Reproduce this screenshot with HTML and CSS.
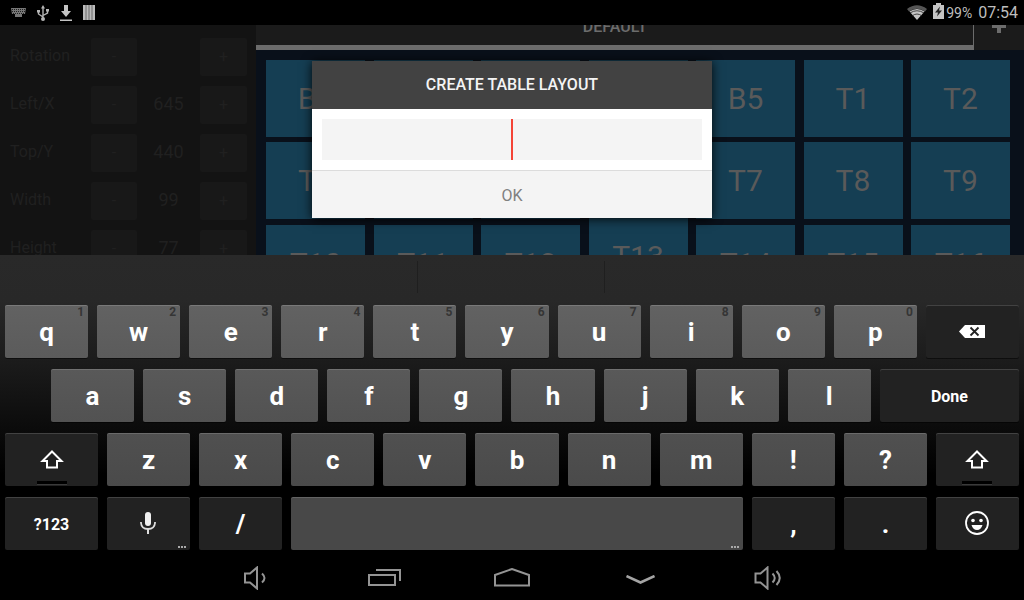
FILE: index.html
```html
<!DOCTYPE html>
<html lang="en">
<head>
<meta charset="utf-8">
<title>Create table layout</title>
<link rel="stylesheet" href="styles.css">
</head>
<body>
<header class="status">
  <div class="status-left">
    <svg width="15" height="9" viewBox="0 0 15 9"><path d="M0 0H15L14 6H11V9H4V6H1Z" fill="#777"/><path d="M1 1.500H14M1 3.500H14M2 5.500H13" stroke="#222" stroke-dasharray="1 1"/></svg>
    <svg width="12" height="16" viewBox="0 0 12 16" fill="none" stroke="#b5b5b5" stroke-width="1.400"><path d="M6 2V14M6 12L1.500 9V6M6 10.500L10.500 8V5"/><path d="M6 0L8 3.500H4ZM0 5H3V7.500H0ZM9 4H12V6.500H9Z" fill="#b5b5b5" stroke="none"/><circle cx="6" cy="14" r="2" fill="#b5b5b5" stroke="none"/></svg>
    <svg width="12" height="16" viewBox="0 0 12 16" fill="#c4c4c4"><path d="M4 0H8V6H11L6 12L1 6H4ZM0 14.500H12V16H0Z"/></svg>
    <svg width="12" height="15" viewBox="0 0 12 15"><path d="M0 0H12V15H0Z" fill="#bbb"/><path d="M3 0V15M6 0V15M9 0V15" stroke="#555" stroke-width=".8"/></svg>
  </div>
  <div class="status-right">
    <svg width="20" height="15" viewBox="0 0 20 15"><path d="M0 4Q10-3.500 20 4L18 6.500Q10 1 2 6.500Z" fill="#555"/><path d="M2.500 6.500Q10 1.500 17.500 6.500L10 15Z" fill="#c4c4c4"/><path d="M3 8Q10 3.500 17 8M5 11Q10 7 15 11" fill="none" stroke="#222" stroke-width=".8"/></svg>
    <svg class="battery" width="11" height="16" viewBox="0 0 11 16"><path d="M0 2H3V0H8V2H11V16H0Z" fill="#c4c4c4"/><path d="M7 3.500L2 9.500H5L4 13.500L9 7.500H6Z" fill="#222"/></svg>
    <span class="percent">99%</span>
    <time class="clock">07:54</time>
  </div>
</header>

<main class="app">
  <aside class="panel">
    <div class="prop"><span>Rotation</span><button>-</button><output></output><button>+</button></div>
    <div class="prop"><span>Left/X</span><button>-</button><output>645</output><button>+</button></div>
    <div class="prop"><span>Top/Y</span><button>-</button><output>440</output><button>+</button></div>
    <div class="prop"><span>Width</span><button>-</button><output>99</output><button>+</button></div>
    <div class="prop"><span>Height</span><button>-</button><output>77</output><button>+</button></div>
  </aside>
  <section class="floor">
    <nav class="tabs">
      <button class="tab">DEFAULT</button>
      <button class="tab-add" aria-label="Add layout"><svg width="16" height="16" viewBox="0 0 16 16"><path d="M8 1V15M1 8H15" stroke="#6c6c6c" stroke-width="4"/></svg></button>
    </nav>
    <div class="tables">
      <button>B1</button><button>B2</button><button>B3</button><button>B4</button><button>B5</button><button>T1</button><button>T2</button>
      <button>T3</button><button>T4</button><button>T5</button><button>T6</button><button>T7</button><button>T8</button><button>T9</button>
      <button>T10</button><button>T11</button><button>T12</button><button class="raised">T13</button><button>T14</button><button>T15</button><button>T16</button>
    </div>
  </section>
  <div class="overlay">
    <form class="dialog" role="dialog" aria-labelledby="dialog-title">
      <h1 class="dialog-title" id="dialog-title">CREATE TABLE LAYOUT</h1>
      <div class="dialog-body">
        <input class="name" type="text" aria-labelledby="dialog-title">
        <span class="caret"></span>
      </div>
      <button class="ok" type="button">OK</button>
    </form>
  </div>
</main>

<section class="keyboard">
  <div class="suggestions"><span></span><span></span><span></span></div>
  <div class="keys">
    <div class="row row-1">
      <button class="key">q<sup>1</sup></button><button class="key">w<sup>2</sup></button><button class="key">e<sup>3</sup></button><button class="key">r<sup>4</sup></button><button class="key">t<sup>5</sup></button><button class="key">y<sup>6</sup></button><button class="key">u<sup>7</sup></button><button class="key">i<sup>8</sup></button><button class="key">o<sup>9</sup></button><button class="key">p<sup>0</sup></button>
      <button class="key dark wide" aria-label="Delete"><svg width="26" height="13" viewBox="0 0 26 13"><path d="M0 6.500L6 0H26V13H6Z" fill="#fff"/><path d="M11.500 2.500L19.500 10.500M19.500 2.500L11.500 10.500" stroke="#222" stroke-width="1.800"/></svg></button>
    </div>
    <div class="row row-2">
      <button class="key">a</button><button class="key">s</button><button class="key">d</button><button class="key">f</button><button class="key">g</button><button class="key">h</button><button class="key">j</button><button class="key">k</button><button class="key">l</button>
      <button class="key dark done">Done</button>
    </div>
    <div class="row row-3">
      <button class="key dark wide shift" aria-label="Shift"><svg width="24" height="19" viewBox="0 0 24 19"><path d="M12 1.500L21.500 11H17V17.500H7V11H2.500Z" fill="none" stroke="#fff" stroke-width="2"/></svg></button>
      <button class="key">z</button><button class="key">x</button><button class="key">c</button><button class="key">v</button><button class="key">b</button><button class="key">n</button><button class="key">m</button><button class="key">!</button><button class="key">?</button>
      <button class="key dark shift" aria-label="Shift"><svg width="24" height="19" viewBox="0 0 24 19"><path d="M12 1.500L21.500 11H17V17.500H7V11H2.500Z" fill="none" stroke="#fff" stroke-width="2"/></svg></button>
    </div>
    <div class="row row-4">
      <button class="key dark wide symbols">?123</button>
      <button class="key dark more" aria-label="Voice input"><svg width="17" height="23" viewBox="0 0 17 23"><rect x="5" y="0" width="6" height="14" rx="3" fill="#f0f0f0"/><path d="M1 10V11Q1.500 17 8 17Q14.500 17 15 11V10" fill="none" stroke="#ddd" stroke-width="1.800"/><path d="M8 17V22" stroke="#ddd" stroke-width="2"/></svg></button>
      <button class="key dark">/</button>
      <button class="key space more" aria-label="Space"></button>
      <button class="key dark">,</button><button class="key dark">.</button>
      <button class="key dark" aria-label="Emoji"><svg width="25" height="25" viewBox="0 0 25 25"><circle cx="12" cy="12" r="11" fill="none" stroke="#fff" stroke-width="1.800"/><circle cx="8" cy="9.500" r="1.800" fill="#fff"/><circle cx="16" cy="9.500" r="1.800" fill="#fff"/><path d="M6.500 14H17.500Q16 19 12 19Q8 19 6.500 14Z" fill="#fff"/></svg></button>
    </div>
  </div>
</section>

<nav class="navbar">
  <button aria-label="Volume down"><svg width="28" height="24" viewBox="0 0 28 24" fill="none" stroke="#949494" stroke-width="2"><path d="M3 7.500H8L15 1.500V22.500L8 16.500H3Z"/><path d="M20 7.500Q25 12 20 16.500"/></svg></button>
  <button aria-label="Recent apps"><svg width="34" height="18" viewBox="0 0 34 18" fill="none" stroke="#949494" stroke-width="2"><path d="M2 6H28V16H2ZM9 1H33V12"/></svg></button>
  <button aria-label="Home"><svg width="36" height="20" viewBox="0 0 36 20" fill="none" stroke="#949494" stroke-width="2"><path d="M1 7L18 1L35 7V17.500H1Z"/></svg></button>
  <button aria-label="Hide keyboard"><svg class="chevron" width="30" height="10" viewBox="0 0 30 10" fill="none" stroke="#a4a4a4" stroke-width="2.500"><path d="M1.500 1L15.500 7.500L29.500 1"/></svg></button>
  <button aria-label="Volume up"><svg width="28" height="24" viewBox="0 0 28 24" fill="none" stroke="#949494" stroke-width="2"><path d="M1.500 7.500H6.500L13.500 1.500V22.500L6.500 16.500H1.500Z"/><path d="M18.500 7.500Q23 12 18.500 16.500M22.500 5Q29 12 22.500 19"/></svg></button>
</nav>
</body>
</html>
```
FILE: styles.css
```css
* { box-sizing: border-box; }
body {
  margin: 0;
  height: 100vh;
  display: flex;
  flex-direction: column;
  overflow: hidden;
  background: #000;
  font-family: Roboto, "Liberation Sans", sans-serif;
}
button { margin: 0; padding: 0; border: 0; font: inherit; color: inherit; }
svg { display: block; }

.status {
  flex: 0 0 25px;
  display: flex;
  align-items: center;
  justify-content: space-between;
  padding: 0 6px 0 11px;
  color: #bebebe;
}
.status-left { display: flex; align-items: center; gap: 11px; }
.status-right { display: flex; align-items: center; gap: 6px; }
.battery { margin-bottom: 3px; }
.percent { font-size: 14px; margin-left: -4px; }
.clock { font-size: 16px; }

.app {
  position: relative;
  flex: 1 1 0;
  min-height: 0;
  display: flex;
  overflow: hidden;
  background: #131313;
}
.panel { flex: 0 0 256px; padding: 8px 9px 0 10px; color: #202020; }
.prop {
  height: 48px;
  display: grid;
  grid-template-columns: 1fr 46px 63px 47px;
  align-items: center;
  font-size: 16px;
  line-height: 18px;
}
.prop span, .prop output { padding-bottom: 2px; }
.prop button { height: 38px; border-radius: 2px; background: #181818; }
.prop output { text-align: center; font-size: 18px; }

.floor { flex: 1; min-width: 0; margin-top: -23px; background: #09101a; }
.tabs { display: flex; height: 48px; background: #1b1b1b; }
.tab {
  flex: 1;
  background: none;
  box-shadow: inset 0 -5px #6c6c6c, inset -1px 0 #6c6c6c;
  color: #6c6c6c;
  font-size: 16px;
  font-weight: 500;
}
.tab-add { flex: 0 0 50px; display: grid; place-items: center; background: none; }
.tables {
  display: grid;
  grid-template-columns: repeat(7, 99px);
  grid-template-rows: 77px 77px 78px;
  row-gap: 5px;
  justify-content: space-between;
  align-items: end;
  padding: 10px 14px 0 10px;
}
.tables button {
  height: 77px;
  background: #153e53;
  color: #5a5a5a;
  font-size: 30px;
}
.tables .raised { align-self: start; margin-top: -6px; }

.overlay {
  position: absolute;
  inset: 0;
  display: grid;
  place-items: center;
  padding-bottom: 2px;
}
.dialog { width: 400px; background: #fff; box-shadow: 0 1px 10px rgba(0, 0, 0, .9); }
.dialog-title {
  margin: 0;
  background: #424242;
  color: #f4f4f4;
  font-size: 16px;
  font-weight: 500;
  line-height: 48px;
  text-align: center;
}
.dialog-body { position: relative; padding: 10px; }
.name {
  display: block;
  width: 100%;
  height: 41px;
  border: 0;
  outline: 0;
  background: #f4f4f4;
  text-align: center;
}
.caret { position: absolute; left: 50%; top: 10px; bottom: 10px; width: 2px; margin-left: -1px; background: #f44336; }
.ok {
  display: block;
  width: 100%;
  height: 48px;
  padding-top: 2px;
  border-top: 1px solid #dcdcdc;
  background: #f4f4f4;
  color: #808080;
  font-size: 16px;
}

.keyboard {
  flex: 0 0 auto;
  background: linear-gradient(#292929 0, #282828 45px, #1b1b1b 108px, #0c0c0c 170px, #000 220px);
}
.suggestions { display: flex; height: 50px; padding: 6px 0 12px; }
.suggestions span { flex: 418; }
.suggestions span:nth-child(2) {
  flex: 0 0 188px;
  border: solid #1f1f1f;
  border-width: 0 1px;
}
.suggestions span:last-child { flex-grow: 420; }
.keys { display: flex; flex-direction: column; gap: 11px; padding: 0 5px 5px; }
.row { display: flex; gap: 9px; height: 53px; }
.row-2 { padding-left: 46px; }
.key {
  position: relative;
  flex: 83 1 0;
  display: flex;
  align-items: center;
  justify-content: center;
  border-radius: 2px;
  background: linear-gradient(#626262, #5b5b5b);
  box-shadow: inset 0 1px rgba(255, 255, 255, .15), 0 1px rgba(0, 0, 0, .5);
  color: #fff;
  font-size: 26px;
  font-weight: 700;
}
.row-2 .key { background: linear-gradient(#595959, #525252); }
.row-3 .key { background: linear-gradient(#505050, #4a4a4a); }
.row .dark { background: #222; }
.row .space { flex-grow: 452; background: #484848; }
.row .wide { flex-grow: 93; }
.row .done { flex-grow: 139; }
.done, .symbols { padding-top: 2px; font-size: 16px; }
.key sup {
  position: absolute;
  top: 0;
  right: 4px;
  color: #353535;
  font-size: 12px;
  line-height: 14px;
}
.shift::after {
  content: "";
  position: absolute;
  bottom: 1px;
  left: 50%;
  width: 30px;
  height: 3px;
  margin-left: -15px;
  background: #000;
  border-bottom: 1px solid #3a3a3a;
}
.more::after {
  content: "";
  position: absolute;
  right: 3px;
  bottom: 2px;
  width: 9px;
  height: 2px;
  background: repeating-linear-gradient(90deg, #aaa 0 2px, transparent 2px 3px);
}

.row .done, .row .symbols { font-size: 16px; }

.navbar { flex: 0 0 45px; display: flex; justify-content: center; }
.navbar button { width: 128px; display: grid; place-items: center; background: none; }
.chevron { margin-top: 4px; }
```
